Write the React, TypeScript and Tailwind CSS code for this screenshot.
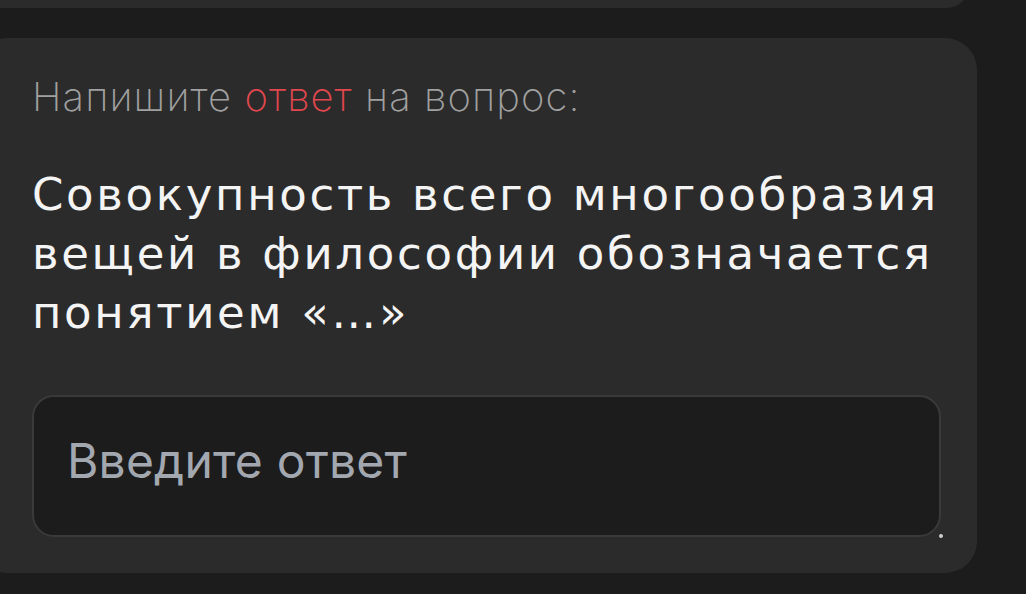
export default function App() {
    return (
        <div className="min-h-[594px] w-full overflow-hidden bg-[#1c1c1c]">
            {/* Предыдущая карточка */}
            <div className="-mt-[40px] -ml-[24px] h-[48px] w-[994px] rounded-[30px] bg-[#2b2b2b]" />

            {/* Карточка вопроса */}
            <div className="mt-[30px] -ml-[24px] w-[1001px] rounded-[32px] bg-[#2b2b2b] pl-[56px] pr-[36px] pt-[35px] pb-[36px]">
                <p className="whitespace-nowrap font-['Inter',sans-serif] text-[40px] font-extralight leading-[48px] tracking-[1.1px] text-[#a0a0a0]">
                    Напишите <span className="text-[#e2474f]">ответ</span> на вопрос:
                </p>
                <h2 className="mt-[44px] whitespace-nowrap font-['DejaVu_Sans',sans-serif] text-[45px] font-normal leading-[59px] tracking-[2.7px] text-[#f4f4f4]">
                    Совокупность всего многообразия
                    <br />
                    вещей в философии обозначается
                    <br />
                    понятием «…»
                </h2>
                <div className="relative mt-[53px]">
                    <textarea
                        placeholder="Введите ответ"
                        className="block h-[142px] w-full resize-none rounded-[22px] border-2 border-[#3a3a3a] bg-[#1c1c1c] px-[33px] pt-[35px] pb-[10px] font-['Inter',sans-serif] text-[48px] leading-[58px] tracking-[0.2px] text-white outline-none placeholder:text-[#a3a8b0]"
                    />
                    <span className="absolute -bottom-[1px] -right-[2px] h-[4px] w-[4px] rounded-full bg-[#cfcfcf]" />
                </div>
            </div>
        </div>
    )
}
